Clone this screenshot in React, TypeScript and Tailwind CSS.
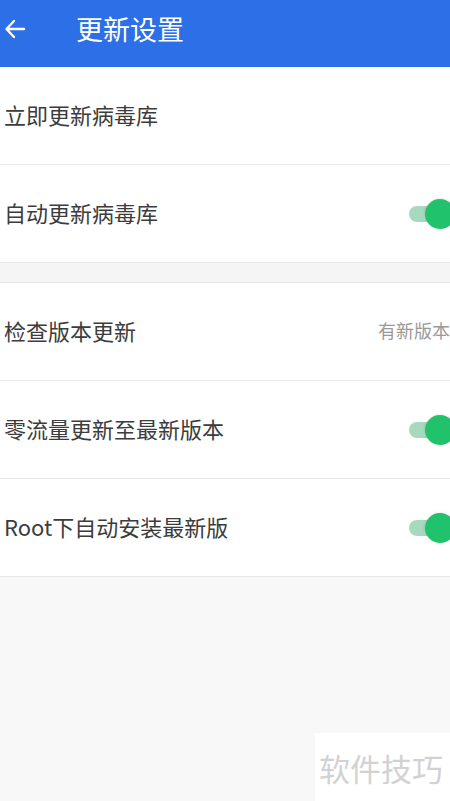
import React from "react";

const font = { fontFamily: '"Noto Sans CJK SC", "Noto Sans", sans-serif' };

function Toggle() {
  return (
    <div className="relative h-[30px] w-[46px] shrink-0 translate-x-[5px]">
      <div className="absolute left-0 top-[7px] h-[16px] w-[40px] rounded-full bg-[#a6d9bd]" />
      <div className="absolute right-0 top-0 h-[30px] w-[30px] rounded-full bg-[#20c26b] shadow-[0_0_3px_rgba(0,0,0,0.15)]" />
    </div>
  );
}

function Row({ label, right, border = true }: { label: string; right?: React.ReactNode; border?: boolean }) {
  return (
    <div className={`flex h-[98px] items-center justify-between bg-white pl-[4px] ${border ? "border-b border-[#e8e8e8]" : ""}`}>
      <span className="-translate-y-[2px] whitespace-nowrap text-[22px] leading-none text-[#3c3c3c]">{label}</span>
      {right}
    </div>
  );
}

export default function App() {
  return (
    <div className="relative h-[801px] w-[450px] overflow-hidden bg-[#f8f8f8]" style={font}>
      <div className="flex h-[67px] items-center bg-[#2c6fe6] pb-[10px] pl-[4px]">
        <svg width="22" height="20" viewBox="0 0 22 20" fill="none" stroke="white" strokeWidth="2.4" strokeLinecap="round" strokeLinejoin="round">
          <path d="M20 10H3M10 2L2.5 10L10 18" />
        </svg>
        <span className="ml-[50px] text-[27px] leading-none text-white">更新设置</span>
      </div>
      <div className="bg-white">
        <Row label="立即更新病毒库" />
        <Row label="自动更新病毒库" right={<Toggle />} />
      </div>
      <div className="h-[20px] border-b border-[#e8e8e8] bg-[#f5f5f5]" />
      <div className="bg-white">
        <Row
          label="检查版本更新"
          right={<span className="-translate-y-[2px] whitespace-nowrap text-[18px] leading-none text-[#9a9a9a]">有新版本</span>}
        />
        <Row label="零流量更新至最新版本" right={<Toggle />} />
        <Row label="Root下自动安装最新版" right={<Toggle />} />
      </div>
      <div className="absolute bottom-0 right-0 flex h-[68px] w-[135px] items-center bg-white pl-[4px]">
        <span className="whitespace-nowrap text-[31px] leading-none text-[#d2d2d2]">软件技巧</span>
      </div>
    </div>
  );
}
